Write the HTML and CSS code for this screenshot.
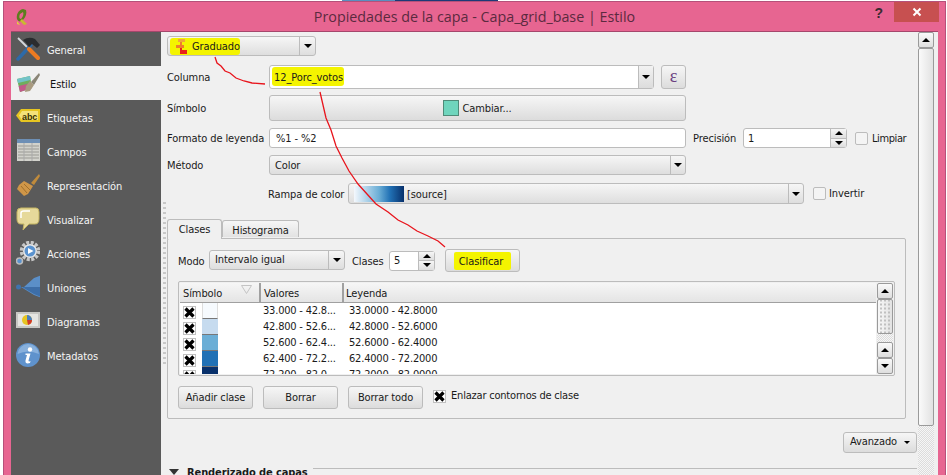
FILE: index.html
```html
<!DOCTYPE html>
<html lang="es">
<head>
<meta charset="utf-8">
<title>Propiedades de la capa</title>
<link rel="stylesheet" href="styles.css">
</head>
<body>
<svg class="defs" width="0" height="0">
  <symbol id="x" viewBox="0 0 11 11"><path d="M1.500 1.500 L9.500 9.500 M9.500 1.500 L1.500 9.500" stroke="#000" stroke-width="3.200" fill="none"/></symbol>
</svg>
<div class="desk"></div>
<div class="window">
  <header class="titlebar">
    <div class="tb-side">
      <svg class="logo" width="14" height="18" viewBox="0 0 14 18"><path d="M8 1 C3 2 1 7 2 11 C3 14 6 14 8 12 C11 9 12 5 11 2 Z M8 4 C9 6 8 9 6 11 C4 11 4 8 5 6 Z" fill="#5d7d1e"/><path d="M7 11 L12 16 L9 17 L5 13 Z" fill="#c9b92f"/><path d="M2 13 L5 17 L2 16 Z" fill="#e4d23c"/></svg>
    </div>
    <div class="tb-title">Propiedades de la capa - Capa_grid_base | Estilo</div>
    <div class="tb-side tb-right">
      <span class="help">?</span>
      <span class="close"><svg width="10" height="10" viewBox="0 0 10 10"><path d="M1.5 1.5 L8.5 8.5 M8.5 1.5 L1.5 8.5" stroke="#fff" stroke-width="2"/></svg></span>
    </div>
  </header>
  <div class="body">
    <nav class="sidebar">
      <div class="nav-item">
        <svg class="nav-icon" viewBox="0 0 24 24"><path d="M2 1 L13 12" stroke="#d5d8dc" stroke-width="1.800"/><path d="M2 22 L15 8" stroke="#2d6aa8" stroke-width="3.500" stroke-linecap="round"/><path d="M13 12 L22 21" stroke="#ee7b22" stroke-width="4" stroke-linecap="round"/><path d="M7 3 Q13 -1 19 2 L24 8 L21 11 L16 7 L13 10 L10 6 Z" fill="#2a2c2f"/></svg>
        <span>General</span>
      </div>
      <div class="nav-item nav-active">
        <svg class="nav-icon" viewBox="0 0 24 24"><path d="M1 8 L14 5 L16 17 L4 21 Z" fill="#6fae5d"/><path d="M1 8 L14 5 L14.500 9 L2 12 Z" fill="#72c3c8"/><path d="M2.600 15 L15 12 L16 17 L4 21 Z" fill="#c25a8a"/><path d="M10 15 L14 10 L18 14 L14 20 L9 21 Z" fill="#a99a80"/><path d="M15 11 L23 2 L24 4 L18 14 Z" fill="#8a8576"/></svg>
        <span>Estilo</span>
      </div>
      <div class="nav-item">
        <svg class="nav-icon" viewBox="0 0 24 24"><path d="M5 4 H24 V17 H5 L0 10.500 Z" fill="#e6c521"/><path d="M6 6 H22 V15 H6 L3 10.500 Z" fill="#f4e27a"/><text x="6" y="14.500" class="abc">abc</text></svg>
        <span>Etiquetas</span>
      </div>
      <div class="nav-item">
        <svg class="nav-icon" viewBox="0 0 24 24"><rect x="1" y="0" width="23" height="22" fill="#d2d2cc"/><rect x="1" y="0" width="23" height="4" fill="#6d8fb5"/><path d="M2 7 H23 M2 10 H23 M2 13 H23 M2 16 H23 M2 19 H23" stroke="#9a9a94"/><path d="M8 4 V22 M16 4 V22" stroke="#aaa"/></svg>
        <span>Campos</span>
      </div>
      <div class="nav-item">
        <svg class="nav-icon" viewBox="0 0 24 24"><path d="M15 10 L23 1 L24 3 L18 12 Z" fill="#c08b3c"/><path d="M8 8 L17 13 L12 21 L8 23 L1 16 L3 12 Z" fill="#cf9648"/><path d="M5 13 L11 20 M8 11 L14 17" stroke="#a0702c"/></svg>
        <span>Representación</span>
      </div>
      <div class="nav-item">
        <svg class="nav-icon" viewBox="0 0 24 24"><path d="M5 1 H20 Q23 1 23 5 V12 Q23 17 19 17 H13 L7 23 L8 17 H5 Q1 17 1 12 V5 Q1 1 5 1 Z" fill="#e6d99a" stroke="#c4b461"/><path d="M5 11 V6 Q5 4 8 4 H14" stroke="#fff" stroke-width="1.500" fill="none"/></svg>
        <span>Visualizar</span>
      </div>
      <div class="nav-item">
        <svg class="nav-icon" viewBox="0 0 24 24"><circle cx="14" cy="10" r="8.500" fill="none" stroke="#c8c8c8" stroke-width="3.500" stroke-dasharray="3 1.500"/><circle cx="14" cy="10" r="7" fill="#e8e8e8"/><circle cx="14" cy="10" r="5.500" fill="#5b93cf"/><path d="M12 7 L17.500 10 L12 13 Z" fill="#fff"/><circle cx="3.500" cy="20" r="3" fill="#5b93cf" stroke="#bbb" stroke-width="1.500"/></svg>
        <span>Acciones</span>
      </div>
      <div class="nav-item">
        <svg class="nav-icon" viewBox="0 0 24 24"><circle cx="2.500" cy="12" r="2.500" fill="#3f73ad"/><path d="M5 12 H8 L18 3 L26 0 V23 L18 20 Z" fill="#5b8fc8"/><path d="M6 12 L25 12 V22 L18 19 Z" fill="#3d6ea8"/></svg>
        <span>Uniones</span>
      </div>
      <div class="nav-item">
        <svg class="nav-icon" viewBox="0 0 24 24"><rect x="0" y="3" width="24" height="16" fill="#c8c8c4"/><rect x="2" y="5" width="20" height="12" fill="#e6e6e2"/><circle cx="11" cy="11" r="5" fill="#e6c521"/><path d="M11 11 L11 6 A5 5 0 0 1 16 11 Z" fill="#4a7fbd"/><path d="M11 11 L16 11 A5 5 0 0 1 12 16 Z" fill="#cf3a2a"/></svg>
        <span>Diagramas</span>
      </div>
      <div class="nav-item">
        <svg class="nav-icon" viewBox="0 0 24 24"><circle cx="12" cy="12" r="12" fill="#5f92cc"/><path d="M12 1 A11 11 0 0 1 23 11 Q12 6 1.500 11 A11 11 0 0 1 12 1 Z" fill="#88b0dc"/><circle cx="14" cy="6.500" r="2.200" fill="#fff"/><path d="M9.500 10.500 H14.500 L12.500 17.500 Q12.500 19 14.500 18 L14 20 Q9 21.500 9.500 17.500 L11 12 H9.500 Z" fill="#fff"/></svg>
        <span>Metadatos</span>
      </div>
    </nav>
    <main class="main">
      <div class="content">
        <div class="row row-render">
          <div class="combo combo-render">
            <span class="combo-text">
              <span class="hl-wrap">
                <svg class="grad-icon" width="12" height="15" viewBox="0 0 12 15"><path d="M2 0 H9 V3 H2 Z" fill="#f0a83a"/><path d="M4 3 H6 V6 H4 Z M0 6 H8 V9 H0 Z" fill="#ee7f2c"/><path d="M4 9 H6 V11 H4 Z M4 11 H11 V15 H4 Z" fill="#e8231b"/></svg>
                <span>Graduado</span>
              </span>
            </span>
            <span class="combo-btn"><i class="arr-d"></i></span>
          </div>
        </div>
        <div class="row row-col">
          <label class="lbl txt-down">Columna</label>
          <div class="combo combo-col field">
            <span class="combo-text"><span class="hl hl-col">12_Porc_votos</span></span>
            <span class="combo-btn"><i class="arr-d"></i></span>
          </div>
          <button class="btn btn-eps">ε</button>
        </div>
        <div class="row row-sym">
          <label class="lbl">Símbolo</label>
          <button class="btn btn-sym"><i class="swatch"></i>Cambiar...</button>
        </div>
        <div class="row row-fmt">
          <label class="lbl">Formato de leyenda</label>
          <div class="input input-fmt">%1 - %2</div>
          <label class="prec">Precisión</label>
          <div class="spin spin-prec">
            <span class="spin-val">1</span>
            <span class="spin-btns"><span><i class="arr-u"></i></span><span><i class="arr-d"></i></span></span>
          </div>
          <i class="check check-lim"></i>
          <label class="lbl-lim">Limpiar</label>
        </div>
        <div class="row row-met">
          <label class="lbl">Método</label>
          <div class="combo combo-met">
            <span class="combo-text">Color</span>
            <span class="combo-btn"><i class="arr-d"></i></span>
          </div>
        </div>
        <div class="row row-ramp">
          <label class="lbl-ramp txt-down">Rampa de color</label>
          <div class="combo combo-ramp">
            <span class="combo-text"><i class="ramp"></i><span class="txt-down">[source]</span></span>
            <span class="combo-btn"><i class="arr-d"></i></span>
          </div>
          <i class="check check-inv"></i>
          <label>Invertir</label>
        </div>
        <div class="tabs">
          <span class="tab tab-on">Clases</span>
          <span class="tab">Histograma</span>
        </div>
        <section class="pane">
          <div class="row row-mode">
            <label class="lbl-mode txt-down">Modo</label>
            <div class="combo combo-mode">
              <span class="combo-text">Intervalo igual</span>
              <span class="combo-btn"><i class="arr-d"></i></span>
            </div>
            <label class="lbl-cl txt-down">Clases</label>
            <div class="spin spin-cl">
              <span class="spin-val">5</span>
              <span class="spin-btns"><span><i class="arr-u"></i></span><span><i class="arr-d"></i></span></span>
            </div>
            <button class="btn btn-classify"><span class="hl hl-cla">Clasificar</span></button>
          </div>
          <div class="table">
            <div class="table-main">
              <div class="thead">
                <span class="th th-sym">Símbolo<svg class="sort" width="11" height="9" viewBox="0 0 11 9"><path d="M0.500 0.500 H10.500 L5.500 8.500 Z" fill="none" stroke="#c4c4c4"/></svg></span>
                <span class="th th-val">Valores</span>
                <span class="th th-leg">Leyenda</span>
              </div>
              <div class="tr"><span class="td-c"><svg class="check-x"><use href="#x"/></svg></span><i class="cell-sw sw1"></i><span class="td-v">33.000 - 42.8...</span><span class="td-l">33.0000 - 42.8000</span></div>
              <div class="tr"><span class="td-c"><svg class="check-x"><use href="#x"/></svg></span><i class="cell-sw sw2"></i><span class="td-v">42.800 - 52.6...</span><span class="td-l">42.8000 - 52.6000</span></div>
              <div class="tr"><span class="td-c"><svg class="check-x"><use href="#x"/></svg></span><i class="cell-sw sw3"></i><span class="td-v">52.600 - 62.4...</span><span class="td-l">52.6000 - 62.4000</span></div>
              <div class="tr"><span class="td-c"><svg class="check-x"><use href="#x"/></svg></span><i class="cell-sw sw4"></i><span class="td-v">62.400 - 72.2...</span><span class="td-l">62.4000 - 72.2000</span></div>
              <div class="tr"><span class="td-c"><svg class="check-x"><use href="#x"/></svg></span><i class="cell-sw sw5"></i><span class="td-v">72.200 - 82.0...</span><span class="td-l">72.2000 - 82.0000</span></div>
            </div>
            <div class="vbar vbar-in">
              <span class="vb-btn"><i class="arr-u"></i></span>
              <span class="vb-thumb"></span>
              <span class="vb-track"></span>
              <span class="vb-btn"><i class="arr-u"></i></span>
              <span class="vb-btn"><i class="arr-d"></i></span>
            </div>
          </div>
          <div class="row row-btns">
            <button class="btn btn-b">Añadir clase</button>
            <button class="btn btn-b">Borrar</button>
            <button class="btn btn-b">Borrar todo</button>
            <svg class="check-x check-link"><use href="#x"/></svg>
            <label class="lbl-link">Enlazar contornos de clase</label>
          </div>
        </section>
        <div class="row row-adv">
          <button class="btn btn-adv"><span class="adv-text">Avanzado</span><i class="arr-d"></i></button>
        </div>
        <div class="group">
          <i class="arr-d arr-group"></i><span class="group-title">Renderizado de capas</span><i class="group-line"></i>
        </div>
      </div>
      <div class="vbar vbar-main">
        <span class="vb-btn"><i class="arr-u"></i></span>
        <span class="vb-thumb vb-long"></span>
        <span class="vb-track"></span>
      </div>
      <i class="dots"></i>
    </main>
  </div>
</div>
<svg class="annot" width="947" height="475" viewBox="0 0 947 475">
  <path d="M215 57 L217 63 L221 66 L225 71 L230 73 L236 78 L244 81 L252 83 L265 84" />
  <path d="M320 92 L323 105 L326 118 L331 130 L336 146 L342 158 L349 171 L358 184 L367 194 L376 204 L388 212 L398 220 L408 225 L417 231 L428 236 L438 241 L445 247" />
</svg>
</body>
</html>
```
FILE: styles.css
```css
* { box-sizing: border-box; }
html, body { margin: 0; height: 475px; overflow: hidden; }
body {
  position: relative;
  background: #fff;
  font: 11px/1 "DejaVu Sans Condensed", "DejaVu Sans", sans-serif;
  letter-spacing: -0.1px;
  color: #1a1a1a;
}
.defs { position: absolute; }
label { white-space: nowrap; }
.txt-down { padding-top: 2px; }
.desk { height: 1px; background: linear-gradient(90deg, transparent 342px, #5a8fc0 342px 395px, #1c3a78 395px 498px, transparent 498px); }
.window {
  margin: 0 0 0 3px;
  width: 943px;
  height: 474px;
  background: #e76591;
  border: 1px solid #b5517a;
  border-bottom: 0;
  display: flex;
  flex-direction: column;
}
.titlebar { height: 29px; display: flex; align-items: flex-start; flex: none; }
.tb-side { width: 140px; display: flex; flex: none; }
.tb-right { justify-content: flex-end; align-items: flex-start; padding-right: 6px; }
.logo { margin: 6px 0 0 11px; }
.tb-title {
  flex: 1;
  text-align: center;
  font: 14.300px/29px "Open Sans", sans-serif;
  letter-spacing: 0;
  color: #5b2a3f;
  white-space: nowrap;
}
.help { font: bold 14px/18px "Liberation Sans", sans-serif; color: #3a2a30; margin: 2px 11px 0 0; }
.close { width: 45px; height: 20px; background: #c75050; display: flex; align-items: center; justify-content: center; }
.body { flex: 1; display: flex; margin: 0 7px 0 7px; border-top: 1px solid #a5476c; min-height: 0; }
.sidebar { width: 150px; background: #5a5a5a; flex: none; color: #f4f4f4; }
.nav-item { height: 34px; display: flex; align-items: center; padding-left: 5px; gap: 7px; }
.nav-item span { padding-top: 2px; }
.nav-icon { width: 24px; height: 24px; flex: none; }
.nav-active { background: #f0f0f0; color: #111; }
.nav-active span { margin-left: 3px; }
.abc { font: bold 9px "Liberation Sans", sans-serif; fill: #3a3000; }
.main { flex: 1; background: #f0f0f0; display: flex; position: relative; min-width: 0; overflow: hidden; }
.content { width: 757px; flex: none; padding: 4px 0 0 6px; }
.vbar-main { width: 16px; flex: none; }
.dots { position: absolute; left: 2px; top: 170px; width: 3px; height: 163px; background: repeating-linear-gradient(#c8c8c8 0 2px, transparent 2px 5px); }
.row { display: flex; align-items: center; }
.lbl { width: 102px; flex: none; }
.combo, .btn, .input, .spin { border: 1px solid #bcbcbc; border-radius: 3px; }
.combo { display: flex; background: linear-gradient(#f6f6f6, #dedede); align-items: stretch; }
.combo-text { flex: 1; display: flex; align-items: center; padding-left: 5px; white-space: nowrap; min-width: 0; }
.combo-btn { width: 15px; flex: none; border-left: 1px solid #bcbcbc; display: flex; align-items: center; justify-content: center; }
.field { background: #fff; }
.field .combo-btn { background: linear-gradient(#f2f2f2, #dcdcdc); }
.arr-d, .arr-u { display: block; width: 0; height: 0; border-left: 4px solid transparent; border-right: 4px solid transparent; }
.arr-d { border-top: 4px solid #000; }
.arr-u { border-bottom: 4px solid #000; }
.btn { background: linear-gradient(#f6f6f6, #dcdcdc); font: inherit; letter-spacing: inherit; color: inherit; padding: 0; display: flex; align-items: center; justify-content: center; }
.input { background: #fff; display: flex; align-items: center; padding-left: 6px; }
.hl { background: #f4f400; border-radius: 3px; }
.row-render { height: 20px; }
.combo-render { width: 149px; height: 20px; }
.combo-render .combo-text { padding-left: 2px; }
.combo-render .combo-btn { width: 16px; }
.hl-wrap { background: #f4f400; width: 70px; height: 17px; display: flex; align-items: center; gap: 4px; border-radius: 3px; padding-left: 6px; }
.grad-icon { flex: none; }
.row-col { height: 25px; margin-top: 8px; }
.combo-col { width: 385px; height: 24px; }
.combo-col .combo-text { padding-left: 2px; }
.hl-col { padding: 5px 1px 3px 2px; }
.btn-eps { width: 25px; height: 24px; margin-left: 7px; font: 18px "Liberation Serif", serif; color: #6a3f80; }
.row-sym { height: 26px; margin-top: 6px; }
.btn-sym { width: 417px; height: 26px; }
.swatch { width: 16px; height: 16px; background: #6fd5bd; border: 1px solid #4f8a78; margin-right: 3px; }
.row-fmt { height: 20px; margin-top: 7px; }
.input-fmt { width: 417px; height: 20px; }
.prec { margin-left: 7px; width: 50px; }
.spin { display: flex; background: #fff; height: 20px; }
.spin-val { flex: 1; display: flex; align-items: center; padding-left: 4px; }
.spin-btns { width: 16px; flex: none; display: flex; flex-direction: column; border-left: 1px solid #bcbcbc; }
.spin-btns span { flex: 1; display: flex; align-items: center; justify-content: center; background: linear-gradient(#f6f6f6, #dedede); }
.spin-btns span + span { border-top: 1px solid #bcbcbc; }
.spin-prec { width: 104px; }
.check { width: 13px; height: 13px; border: 1px solid #bcbcbc; border-radius: 2px; background: #f4f4f4; flex: none; }
.check-lim { margin: 0 4px 0 8px; }
.lbl-lim { letter-spacing: -0.4px; }
.row-met { height: 20px; margin-top: 7px; }
.combo-met { width: 417px; height: 20px; }
.row-ramp { height: 21px; margin-top: 8px; }
.lbl-ramp { width: 80px; margin-left: 101px; flex: none; }
.combo-ramp { width: 456px; height: 21px; margin-left: 0; }
.combo-ramp .combo-text { padding-left: 5px; }
.ramp { width: 50px; height: 16px; margin-right: 3px; flex: none; background: linear-gradient(90deg, #f4f8fd, #6baed6 50%, #2171b5 72%, #08306b 100%); }
.check-inv { margin: 0 3px 0 9px; }
.tabs { display: flex; margin-top: 14px; height: 20px; align-items: flex-end; position: relative; z-index: 1; }
.tab { height: 17px; border: 1px solid #bcbcbc; border-bottom: 0; border-radius: 3px 3px 0 0; background: linear-gradient(#f6f6f6, #e2e2e2); padding: 2px 10px 0; display: flex; align-items: center; width: 77px; justify-content: center; margin-bottom: 1px; }
.tab-on { width: 55px; height: 20px; background: #f0f0f0; margin-bottom: -1px; padding-top: 0; }
.pane { width: 739px; height: 181px; border: 1px solid #bcbcbc; border-radius: 2px; padding: 10px 0 0 10px; }
.row-mode { height: 23px; }
.lbl-mode { width: 31px; flex: none; }
.combo-mode { width: 136px; height: 20px; margin-top: -2px; }
.combo-mode .combo-btn { width: 16px; }
.lbl-cl { width: 37px; margin-left: 7px; flex: none; }
.spin-cl { width: 46px; height: 20px; }
.btn-classify { width: 75px; height: 23px; margin-left: 10px; }
.hl-cla { padding: 4px 8px 3px 5px; border-radius: 2px; }
.table { width: 717px; height: 95px; margin-top: 9px; border: 1px solid #bcbcbc; border-radius: 2px; background: #f0f0f0; padding: 1px; display: flex; }
.table-main { flex: 1; background: #fff; overflow: hidden; min-width: 0; }
.thead { display: flex; height: 20px; border-bottom: 1px solid #a0a0a0; background: linear-gradient(#f6f6f6, #e4e4e4); }
.th { display: flex; align-items: center; padding: 2px 0 0 3px; border-right: 2px solid #a0a0a0; position: relative; }
.th-sym { width: 81px; }
.th-val { width: 83px; }
.th-leg { flex: 1; border-right: 0; padding-left: 2px; }
.sort { position: absolute; right: 7px; top: 2px; }
.tr { display: flex; height: 16px; align-items: center; letter-spacing: -0.2px; }
.td-c { width: 22px; padding: 2px 0 0 3px; flex: none; display: flex; }
.check-x { width: 13px; height: 13px; background: #fff; border: 1px solid #c0c0c0; flex: none; }
.cell-sw { width: 16px; height: 16px; flex: none; border-bottom: 1px solid #777; }
.sw1 { background: #f6fafe; border-left: 1px solid #ddd; border-right: 1px solid #ddd; }
.sw2 { background: #c6dbef; }
.sw3 { background: #6baed6; }
.sw4 { background: #2171b5; }
.sw5 { background: #08306b; }
.td-v { width: 131px; flex: none; padding: 0 0 2px 45px; white-space: nowrap; overflow: hidden; }
.td-l { white-space: nowrap; padding-bottom: 2px; }
.vbar { display: flex; flex-direction: column; flex: none; }
.vbar-in { width: 16px; margin-left: 1px; }
.vb-btn { height: 16px; flex: none; border: 1px solid #9a9a9a; border-radius: 2px; background: linear-gradient(#fafafa, #dedede); display: flex; align-items: center; justify-content: center; }
.vb-thumb { height: 35px; flex: none; border: 1px solid #9a9a9a; border-radius: 2px; background: radial-gradient(circle, #b0b0b0 0.600px, transparent 1px) center / 4px 4px, linear-gradient(90deg, #f8f8f8, #e2e2e2); }
.vb-track { flex: 1; background: repeating-conic-gradient(#dcdcdc 0 25%, #f6f6f6 0 50%) 0 0 / 2px 2px; }
.vb-long { height: 378px; background: linear-gradient(90deg, #fafafa, #e2e2e2); }
.row-btns { margin-top: 10px; height: 23px; }
.btn-b { width: 75px; height: 23px; margin-right: 10px; flex: none; }
.check-link { margin: 0 5px 2px 0; }
.lbl-link { letter-spacing: -0.2px; padding-bottom: 4px; }
.row-adv { justify-content: flex-end; margin: 13px 1px 0 0; }
.btn-adv { width: 74px; height: 21px; gap: 7px; }
.adv-text { padding-bottom: 2px; }
.btn-adv .arr-d { border-left-width: 3px; border-right-width: 3px; border-top-width: 3px; }
.group { display: flex; align-items: center; margin-top: 12px; height: 14px; padding-left: 2px; }
.arr-group { border-left-width: 5px; border-right-width: 5px; border-top: 6px solid #333; }
.group-title { font-weight: 700; margin: 0 5px 0 8px; white-space: nowrap; }
.group-line { flex: 1; height: 1px; background: #bcbcbc; margin-top: -8px; margin-right: 1px; }
.annot { position: absolute; left: 0; top: 0; pointer-events: none; }
.annot path { fill: none; stroke: #e8141c; stroke-width: 1.300; }
```
